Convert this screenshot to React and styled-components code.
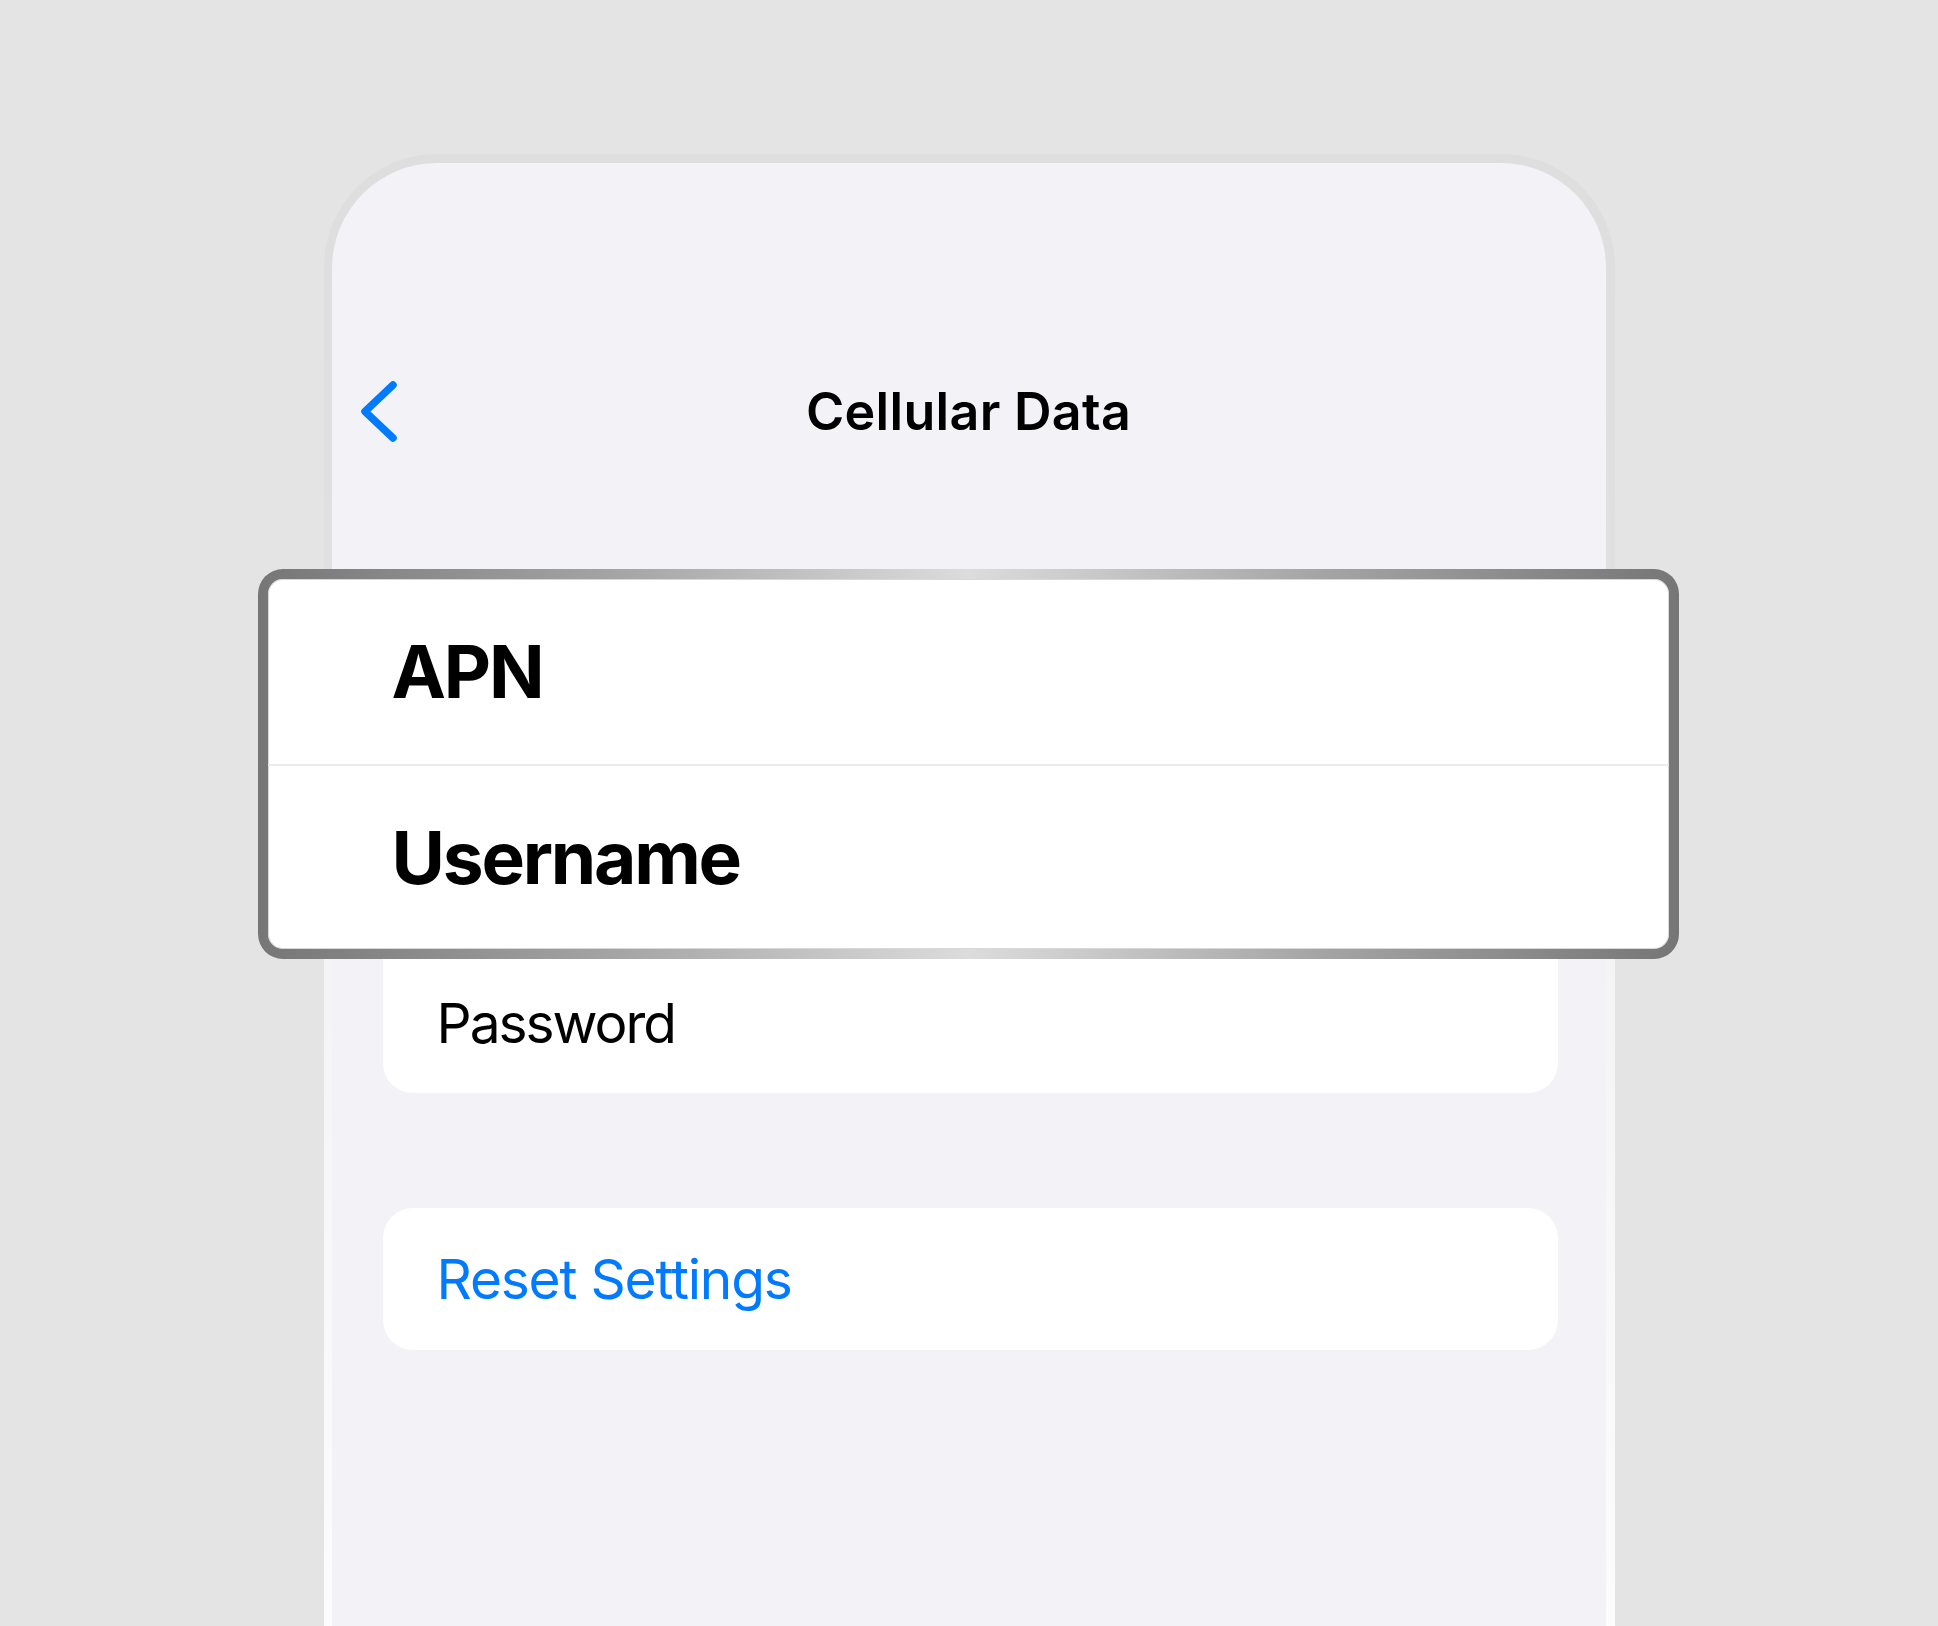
import React from 'react';
import styled, { createGlobalStyle } from 'styled-components';

const GlobalStyle = createGlobalStyle`
  * {
    box-sizing: border-box;
  }

  body {
    margin: 0;
    font-family: Inter, "Noto Sans", "Liberation Sans", sans-serif;
    overflow: hidden;
  }
`;

const settings = [
  { id: 'apn', label: 'APN' },
  { id: 'user', label: 'Username' },
  { id: 'pass', label: 'Password' },
];

const BackChevron = () => (
  <svg width="40" height="64" viewBox="0 0 40 64" fill="none">
    <path
      d="M34 6 L6 32.5 L34 59"
      stroke="#007aff"
      strokeWidth="7.5"
      strokeLinecap="round"
      strokeLinejoin="round"
    />
  </svg>
);

const App = () => {
  return (
    <>
      <GlobalStyle />
      <Page>
        <Phone>
          <Screen>
            <NavBar>
              <BackButton aria-label="Back">
                <BackChevron />
              </BackButton>
              <Title>Cellular Data</Title>
              <span />
            </NavBar>

            <ListGroup $top={208}>
              {settings.map((item) => (
                <Row key={item.id}>{item.label}</Row>
              ))}
            </ListGroup>

            <ListGroup $top={115}>
              <Row $accent>Reset Settings</Row>
            </ListGroup>

            <Magnifier>
              <Lens>
                <ZoomRow>APN</ZoomRow>
                <ZoomRow>Username</ZoomRow>
              </Lens>
            </Magnifier>
          </Screen>
        </Phone>
      </Page>
    </>
  );
};

const Page = styled.div`
  height: 100vh;
  background: #e4e4e4;
  display: flex;
  justify-content: center;
  padding-top: 154px;
`;

const Phone = styled.div`
  width: 1291px;
  height: 100%;
  padding: 9px 9px 0 8px;
  border-radius: 113px 113px 0 0;
  background: linear-gradient(180deg, #dedede 0%, #e0e0e0 28%, #f4f4f4 55%, #fcfcfc 100%);
`;

const Screen = styled.div`
  position: relative;
  height: 100%;
  border-radius: 105px 105px 0 0;
  background: #f2f2f7;
  padding-top: 200px;
`;

const NavBar = styled.div`
  display: grid;
  grid-template-columns: 1fr auto 1fr;
  align-items: center;
  height: 96px;
`;

const BackButton = styled.button`
  justify-self: start;
  display: flex;
  align-items: center;
  margin-left: 27px;
  padding: 0;
  border: none;
  background: none;
  cursor: pointer;
`;

const Title = styled.h1`
  margin: 0;
  font-size: 52px;
  font-weight: 600;
  color: #000;
  letter-spacing: 0.3px;
`;

const ListGroup = styled.div`
  margin: ${(p) => p.$top}px 48px 0 51px;
  background: #fff;
  border-radius: 30px;
  overflow: hidden;
`;

const Row = styled.div`
  display: flex;
  align-items: center;
  height: 142px;
  padding-left: 54px;
  font-size: 55px;
  font-weight: 400;
  letter-spacing: ${(p) => (p.$accent ? '-1.2px' : '-2px')};
  color: ${(p) => (p.$accent ? '#007aff' : '#000')};

  & + & {
    border-top: 1px solid #e5e5ea;
  }
`;

const Magnifier = styled.div`
  position: absolute;
  left: -74px;
  top: 406px;
  width: 1421px;
  height: 390px;
  padding: 10px;
  border-radius: 25px;
  background: linear-gradient(
    90deg,
    #767676 0%,
    #a4a4a4 25%,
    #dcdcdc 50%,
    #a4a4a4 75%,
    #767676 100%
  );
`;

const Lens = styled.div`
  height: 100%;
  background: #fff;
  border-radius: 15px;
  box-shadow: inset 0 0 0 1px rgba(200, 200, 200, 0.7);
  overflow: hidden;
`;

const ZoomRow = styled.div`
  display: flex;
  align-items: center;
  height: 185px;
  padding-left: 124px;
  font-size: 73px;
  font-weight: 700;
  letter-spacing: -2.2px;
  color: #000;

  & + & {
    border-top: 2px solid #ebebeb;
  }
`;

export default App;
